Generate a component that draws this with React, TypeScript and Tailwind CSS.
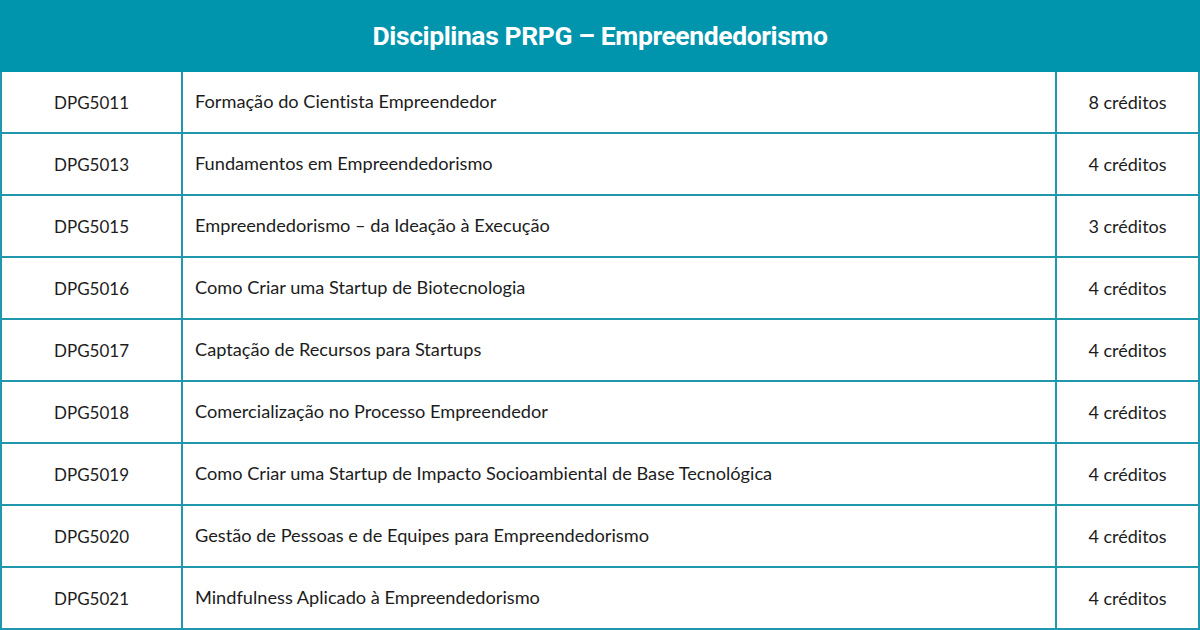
import React from "react";

const rows = [
  { code: "DPG5011", name: "Formação do Cientista Empreendedor", credits: "8 créditos" },
  { code: "DPG5013", name: "Fundamentos em Empreendedorismo", credits: "4 créditos" },
  { code: "DPG5015", name: "Empreendedorismo – da Ideação à Execução", credits: "3 créditos" },
  { code: "DPG5016", name: "Como Criar uma Startup de Biotecnologia", credits: "4 créditos" },
  { code: "DPG5017", name: "Captação de Recursos para Startups", credits: "4 créditos" },
  { code: "DPG5018", name: "Comercialização no Processo Empreendedor", credits: "4 créditos" },
  { code: "DPG5019", name: "Como Criar uma Startup de Impacto Socioambiental de Base Tecnológica", credits: "4 créditos" },
  { code: "DPG5020", name: "Gestão de Pessoas e de Equipes para Empreendedorismo", credits: "4 créditos" },
  { code: "DPG5021", name: "Mindfulness Aplicado à Empreendedorismo", credits: "4 créditos" },
];

const App = () => {
  return (
    <div className="w-[1200px] h-[630px] bg-white overflow-hidden font-['Lato',sans-serif] [font-variant-ligatures:none]">
      <header className="h-[72px] bg-[#0095ad] flex items-center justify-center">
        <h1 className="text-white text-[26.5px] font-bold tracking-[-0.4px] font-['Roboto',sans-serif] leading-none">
          Disciplinas PRPG – Empreendedorismo
        </h1>
      </header>

      <div className="border-x-2 border-[#1f97ac]">
        {rows.map((row) => (
          <div key={row.code} className="flex h-[62px] border-b-2 border-[#1f97ac] text-[18px] text-[#1c1c1c]">
            <div className="w-[181px] flex items-center justify-center border-r-2 border-[#1f97ac] text-[17px] pt-[1px]">
              {row.code}
            </div>
            <div className="flex-1 flex items-center pl-[12px] border-r-2 border-[#1f97ac] text-[18.2px]">
              {row.name}
            </div>
            <div className="w-[141px] flex items-center justify-center">{row.credits}</div>
          </div>
        ))}
      </div>
    </div>
  );
};

export default App;
